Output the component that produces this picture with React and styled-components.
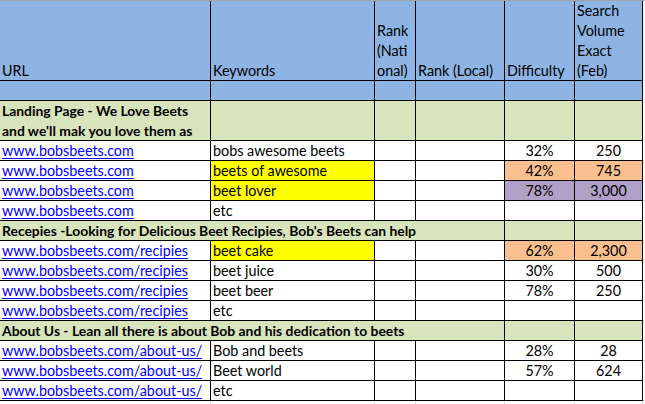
import React from "react";
import styled, { createGlobalStyle } from "styled-components";

const Global = createGlobalStyle`
  html, body { margin: 0; padding: 0; background: #ffffff; }
  body { font-family: Lato, "Open Sans", sans-serif; font-size: 14.35px; color: #000; }
`;

const FILLS = {
  header: "#8db4e2",
  section: "#d8e4bc",
  yellow: "#ffff00",
  orange: "#fabf8f",
  purple: "#b1a0c7",
  none: "#ffffff",
};

const Sheet = styled.div`
  display: grid;
  grid-template-columns: 211px 164px 41px 89px 70px 68px 1fr;
  grid-template-rows: 80px 20px 40px repeat(4, 20px) 20px repeat(4, 20px) 20px repeat(3, 20px) 1fr;
  width: 645px;
  height: 404px;
  border-top: 1px solid #a5a5a5;
  box-sizing: border-box;
  overflow: hidden;
`;

const Cell = styled.div`
  box-sizing: border-box;
  background: ${(p) => FILLS[p.$fill || "none"]};
  border-right: 1px solid #000;
  border-bottom: 1px solid #000;
  grid-column: ${(p) => (p.$span ? `span ${p.$span}` : "auto")};
  display: flex;
  flex-direction: column;
  justify-content: flex-end;
  align-items: ${(p) => (p.$center ? "center" : "flex-start")};
  padding: 0 2px 0 2px;
  font-weight: ${(p) => (p.$bold ? 700 : 400)};
  font-size: ${(p) => (p.$bold ? "13.9px" : "14.35px")};
  line-height: 18px;
  white-space: nowrap;
  overflow: visible;
`;

const GhostCell = styled.div`
  box-sizing: border-box;
  border-right: ${(p) => (p.$last ? "none" : "1px solid #dadcdd")};
  border-bottom: ${(p) => (p.$bottom ? "none" : "1px solid #dadcdd")};
  background: #fff;
`;

const Line = styled.span`
  display: block;
  height: 20px;
  line-height: 21px;
`;

const Link = styled.a`
  color: #0000ff;
  text-decoration: underline;
  text-underline-offset: 2px;
  line-height: 18px;
`;

const Wrap = styled.div`
  white-space: normal;
  width: 100%;
`;

const sections = [
  {
    title: ["Landing Page - We Love Beets", "and we'll mak you love them as"],
    wrap: true,
    rows: [
      ["www.bobsbeets.com", "bobs awesome beets", null, "32%", "250", null],
      ["www.bobsbeets.com", "beets of awesome", "yellow", "42%", "745", "orange"],
      ["www.bobsbeets.com", "beet lover", "yellow", "78%", "3,000", "purple"],
      ["www.bobsbeets.com", "etc", null, "", "", null],
    ],
  },
  {
    title: ["Recepies -Looking for Delicious Beet Recipies, Bob's Beets can help"],
    rows: [
      ["www.bobsbeets.com/recipies", "beet cake", "yellow", "62%", "2,300", "orange"],
      ["www.bobsbeets.com/recipies", "beet juice", null, "30%", "500", null],
      ["www.bobsbeets.com/recipies", "beet beer", null, "78%", "250", null],
      ["www.bobsbeets.com/recipies", "etc", null, "", "", null],
    ],
  },
  {
    title: ["About Us - Lean all there is about Bob and his dedication to beets"],
    rows: [
      ["www.bobsbeets.com/about-us/", "Bob and beets", null, "28%", "28", null],
      ["www.bobsbeets.com/about-us/", "Beet world", null, "57%", "624", null],
      ["www.bobsbeets.com/about-us/", "etc", null, "", "", null],
    ],
  },
];

const lines = (arr) => arr.map((t, i) => <Line key={i}>{t}</Line>);

export default function App() {
  const out = [];
  out.push(<Cell key="h1" $fill="header">URL</Cell>);
  out.push(<Cell key="h2" $fill="header">Keywords</Cell>);
  out.push(<Cell key="h3" $fill="header">{lines(["Rank", "(Nati", "onal)"])}</Cell>);
  out.push(<Cell key="h4" $fill="header">Rank (Local)</Cell>);
  out.push(<Cell key="h5" $fill="header">Difficulty</Cell>);
  out.push(<Cell key="h6" $fill="header">{lines(["Search", "Volume", "Exact", "(Feb)"])}</Cell>);
  out.push(<GhostCell key="hg" $last />);
  for (let i = 0; i < 6; i++) out.push(<Cell key={"b" + i} $fill="header" />);
  out.push(<GhostCell key="bg" $last />);

  sections.forEach((s, si) => {
    if (s.wrap) {
      out.push(
        <Cell key={`s${si}a`} $fill="section" $bold>
          <Wrap>{lines(s.title)}</Wrap>
        </Cell>
      );
      for (let i = 0; i < 5; i++) out.push(<Cell key={`s${si}${i}`} $fill="section" />);
    } else {
      out.push(
        <Cell key={`s${si}a`} $fill="section" $bold $span={4}>
          {s.title[0]}
        </Cell>
      );
      out.push(<Cell key={`s${si}b`} $fill="section" />);
      out.push(<Cell key={`s${si}c`} $fill="section" />);
    }
    out.push(<GhostCell key={`s${si}g`} $last />);
    s.rows.forEach((r, ri) => {
      const [url, kw, kwFill, diff, vol, numFill] = r;
      const k = `r${si}-${ri}`;
      out.push(
        <Cell key={k + "u"}>
          <Link href="#">{url}</Link>
        </Cell>
      );
      out.push(<Cell key={k + "k"} $fill={kwFill || "none"}>{kw}</Cell>);
      out.push(<Cell key={k + "n"} />);
      out.push(<Cell key={k + "l"} />);
      out.push(<Cell key={k + "d"} $fill={numFill || "none"} $center>{diff}</Cell>);
      out.push(<Cell key={k + "v"} $fill={numFill || "none"} $center>{vol}</Cell>);
      out.push(<GhostCell key={k + "g"} $last />);
    });
  });
  for (let i = 0; i < 7; i++) out.push(<GhostCell key={"z" + i} $bottom $last={i === 6} />);

  return (
    <>
      <Global />
      <Sheet>{out}</Sheet>
    </>
  );
}
